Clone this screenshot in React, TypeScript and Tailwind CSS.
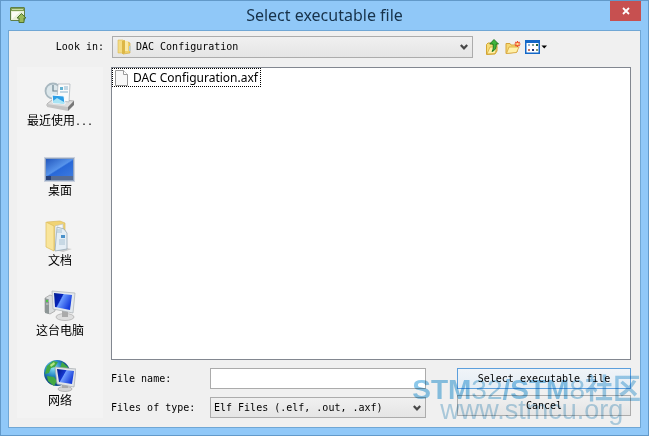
import React from 'react';

const MONO = "font-['DejaVu_Sans_Mono','Noto_Sans_CJK_SC',monospace] text-[10px] leading-4 text-black";

function AppIcon() {
  return (
    <svg className="h-[17px] w-[17px]" viewBox="0 0 17 17" aria-hidden="true">
      <rect x="0.5" y="0.5" width="14" height="13" rx="0.5" fill="#e8f0d8" stroke="#5f7f48" />
      <rect x="1" y="1" width="13" height="3" fill="#7f9f55" />
      <path d="M2 2.5h11" stroke="#c7d9a5" />
      <path d="M2 12V5h8z" fill="#fff" opacity="0.8" />
      <path d="M11.5 6.5 16 11h-2v4.500h-5V11H7z" fill="#9aba5a" stroke="#4e7430" />
    </svg>
  );
}

function FolderIcon() {
  return (
    <svg className="h-4 w-4" viewBox="0 0 16 16" aria-hidden="true">
      <path d="M2 1h5l1 1v13l-2-1H2z" fill="#f4dc84" stroke="#dcb850" strokeWidth="0.6" />
      <path d="M8 3h4l2 1v10l-7 1z" fill="#f0d06a" stroke="#cfa63c" strokeWidth="0.6" />
      <path d="M6 2l3-1v13l-3 1z" fill="#dcb646" />
      <path d="M9 2h3v10H9z" fill="#fae9a6" />
      <path d="M13 7h1.500v5H13z" fill="#b0cadb" />
    </svg>
  );
}

function FileIcon() {
  return (
    <svg className="h-4 w-[14px]" viewBox="0 0 14 16" aria-hidden="true">
      <path d="M.5.5h8l4 4v11H.5z" fill="#f7f7f7" stroke="#999" />
      <path d="M8.500.5v4h4" fill="#fff" stroke="#999" />
    </svg>
  );
}

function Chevron() {
  return (
    <svg className="pointer-events-none absolute top-1/2 right-[5px] h-2 w-2 -translate-y-1/2" viewBox="0 0 8 8" aria-hidden="true">
      <path d="M0.800 2 4 5.300 7.200 2" fill="none" stroke="#484848" strokeWidth="2.200" />
    </svg>
  );
}

function UpIcon() {
  return (
    <svg className="h-4 w-4" viewBox="0 0 16 16" aria-hidden="true">
      <path d="M1.500 5.500 3 4h3l1 1.500h5V12l-2 3-8.500.5z" fill="#f6dc78" stroke="#d3a534" />
      <path d="M2 15 5 8h7l-2 6.500z" fill="#fff0a8" stroke="#d3a534" strokeWidth="0.700" />
      <path d="M9 .5 13.500 5h-2.300c.3 4-1 6.500-4.200 7.500C8.500 10 8.500 8 8 5H4.800z" fill="#3fb43b" stroke="#18751d" strokeWidth="0.900" />
    </svg>
  );
}

function NewFolderIcon() {
  return (
    <svg className="h-4 w-4" viewBox="0 0 16 16" aria-hidden="true">
      <path d="M1 14.500v-10h4l1 1.500h6v7z" fill="#f5d873" stroke="#d6a43c" />
      <path d="M1.500 14.500 4 8h10l-2.500 5.500z" fill="#fff0a8" stroke="#d6a43c" strokeWidth="0.800" />
      <path d="M12.500 2v6M9.500 5h6M10.400 3l4.200 4M14.600 3l-4.200 4" stroke="#ee4422" strokeWidth="1.200" />
      <circle cx="12.500" cy="5" r="1.300" fill="#ffe18a" />
    </svg>
  );
}

function ViewIcon() {
  return (
    <svg className="h-4 w-[23px]" viewBox="0 0 23 16" aria-hidden="true">
      <rect x="0" y="1" width="15" height="14" fill="#1468c8" />
      <rect x="1.500" y="4" width="12" height="9.500" fill="#fff" />
      <path d="M3 5h2v2H3z" fill="#8fb2dd" />
      <path d="M7 5h2v2H7z" fill="#7f9b95" />
      <path d="M11 5h2v2h-2z" fill="#21683c" />
      <path d="M3 10h2v2H3z" fill="#c87563" />
      <path d="M7 10h2v2H7z" fill="#1d2f78" />
      <path d="M11 10h2v2h-2z" fill="#8a9a72" />
      <path d="M16.500 6.500h5.500l-2.750 3z" fill="#000" />
    </svg>
  );
}

function RecentIcon() {
  return (
    <svg className="h-8 w-8" viewBox="0 0 32 32" aria-hidden="true">
      <path d="M3 24 9 19l21 2-6 7-21-2z" fill="#dedede" stroke="#9b9b9b" strokeWidth="0.700" />
      <path d="m3 24 21 3v4L3 27z" fill="#c4c4c4" />
      <path d="m24 27 6-6v4l-6 6z" fill="#777" />
      <circle cx="9" cy="11" r="7.500" fill="#dce7eb" stroke="#a8b8c0" strokeWidth="1.800" />
      <path d="M9 5v6h5" fill="none" stroke="#6b8491" strokeWidth="1.200" />
      <path d="M14 4h12l-1 18-12-2z" fill="#fafafa" stroke="#a6b0b7" strokeWidth="0.700" />
      <path d="M16 7h3v3h-3z" fill="#61b2d3" />
      <path d="M20 7h4M20 9h4M16 12h8" stroke="#8ab3cc" />
      <path d="m8 15 12 1 1 8-12-1z" fill="#2b9ee6" stroke="#fff" />
      <path d="m9 21 4-3 7 4v2l-11-1z" fill="#a8e4f5" />
    </svg>
  );
}

function DesktopIcon() {
  return (
    <svg className="h-8 w-8" viewBox="0 0 32 32" aria-hidden="true">
      <defs>
        <linearGradient id="desk" x1="0" y1="0" x2="1" y2="1">
          <stop offset="0" stopColor="#2458bd" />
          <stop offset="0.500" stopColor="#5794eb" />
          <stop offset="0.550" stopColor="#2868d8" />
          <stop offset="1" stopColor="#3b79df" />
        </linearGradient>
      </defs>
      <rect x="0" y="7" width="31" height="25" fill="#c9d0dd" />
      <rect x="1" y="8" width="29" height="23" fill="#8fa3c0" />
      <rect x="2" y="9" width="27" height="17" fill="url(#desk)" />
      <path d="M2 26h27v4H2z" fill="#566c93" />
      <path d="M2 26h5v4H2z" fill="#263f76" />
    </svg>
  );
}

function DocumentsIcon() {
  return (
    <svg className="h-8 w-8" viewBox="0 0 32 32" aria-hidden="true">
      <path d="m22 28 6 1-9 3-8-2z" fill="#ccc" />
      <path d="M3 2 16 1l5 2v23l-11 4z" fill="#f0d374" stroke="#d8b552" strokeWidth="0.600" />
      <path d="m11 6 8-2v22l-8 4z" fill="#f5f8fa" stroke="#b9bec0" strokeWidth="0.600" />
      <path d="m13 7 7 2 3 4v16l-12 2z" fill="#e5eef5" stroke="#8fa5b1" strokeWidth="0.700" />
      <path d="m2 2 8 4v25l-8-4z" fill="#f9e59b" stroke="#dcbb59" strokeWidth="0.700" />
      <path d="M13 10h5M13 12h5M15 20h6M15 22h6M15 24h6" stroke="#9cb8ca" strokeWidth="0.800" />
      <path d="M17 15h4v3h-4z" fill="#4b92ca" />
    </svg>
  );
}

function ComputerIcon() {
  return (
    <svg className="h-8 w-8" viewBox="0 0 32 32" aria-hidden="true">
      <defs>
        <linearGradient id="screen" x1="0" y1="0" x2="1" y2="0.500">
          <stop offset="0" stopColor="#001d91" />
          <stop offset="0.420" stopColor="#0522b8" />
          <stop offset="0.480" stopColor="#6a9aff" />
          <stop offset="1" stopColor="#153bdc" />
        </linearGradient>
      </defs>
      <path d="m1 8 5-3 5 2v14l-5 3-5-2z" fill="#d9dcdd" stroke="#999" strokeWidth="0.700" />
      <path d="m1 8 4 1.500V24l-4-1z" fill="#8d9696" />
      <path d="M2 11h2.500M2 14h2.500" stroke="#d0d4d4" />
      <path d="M2 10h2v2H2z" fill="#4bc944" />
      <ellipse cx="21" cy="27" rx="9" ry="3.500" fill="#dedede" stroke="#a9a9a9" strokeWidth="0.700" />
      <path d="m18 20 6 1v6h-6z" fill="#aaa" />
      <path d="m8 1 23 2-2 20L9 19z" fill="#e3e8ec" stroke="#abb0b5" strokeWidth="0.700" />
      <path d="m10 3 18 2-2 15-15-3z" fill="url(#screen)" />
    </svg>
  );
}

function NetworkIcon() {
  return (
    <svg className="h-8 w-8" viewBox="0 0 32 32" aria-hidden="true">
      <defs>
        <radialGradient id="globe" cx="0.350" cy="0.300">
          <stop offset="0" stopColor="#8ee3f5" />
          <stop offset="0.600" stopColor="#2889c7" />
          <stop offset="1" stopColor="#114e8a" />
        </radialGradient>
        <linearGradient id="net" x1="0" y1="0" x2="1" y2="0.500">
          <stop offset="0" stopColor="#001785" />
          <stop offset="0.450" stopColor="#1537cf" />
          <stop offset="0.500" stopColor="#709eff" />
          <stop offset="1" stopColor="#173dd9" />
        </linearGradient>
      </defs>
      <circle cx="13" cy="13" r="13" fill="url(#globe)" />
      <path d="m3 6 6-5 5 1-3 5-4 1-2 5-4 1zM18 2l6 5-1 3-7-2zM3 16l7 1 3 4-3 5-6-5z" fill="#42a943" />
      <path d="m6 5 4-3 1 2-4 3z" fill="#b6e687" />
      <ellipse cx="21" cy="29" rx="7" ry="2.500" fill="#d5d5d5" stroke="#999" strokeWidth="0.600" />
      <path d="M18 24h6v4h-6z" fill="#aaa" />
      <path d="m11 7 21 2-2 18-17-3z" fill="#e2e5e8" stroke="#a4a9ad" strokeWidth="0.700" />
      <path d="m13 9 17 2-2 13-13-2z" fill="url(#net)" />
    </svg>
  );
}

const places = [
  { label: '最近使用', clipped: true, icon: <RecentIcon /> },
  { label: '桌面', clipped: false, icon: <DesktopIcon /> },
  { label: '文档', clipped: false, icon: <DocumentsIcon /> },
  { label: '这台电脑', clipped: false, icon: <ComputerIcon /> },
  { label: '网络', clipped: false, icon: <NetworkIcon /> },
];

export default function App() {
  const [fileName, setFileName] = React.useState('');

  return (
    <div className="relative flex min-h-screen flex-col border border-[#6299c9] bg-[#90c8f8] px-[7px] pb-[7px]">
      <header className="flex h-[29px] items-start">
        <div className="flex w-[90px] pt-[6px] pl-[2px]">
          <AppIcon />
        </div>
        <h1 className="flex-1 pt-[2px] text-center font-['Noto_Sans','Open_Sans',sans-serif] text-base leading-6 text-[#17324a]">
          Select executable file
        </h1>
        <div className="flex w-[90px] justify-end">
          <button aria-label="Close" className="flex h-5 w-[31px] items-center justify-center bg-[#c75050]">
            <svg className="h-2 w-2" viewBox="0 0 8 8" aria-hidden="true">
              <path d="m1 1 6 6M7 1 1 7" stroke="#fff" strokeWidth="1.800" />
            </svg>
          </button>
        </div>
      </header>

      <main className="flex flex-1 flex-col border border-[#70a7d5] bg-[#f0f0f0] pt-[5px] pr-[9px] pb-[9px] pl-2">
        <div className="flex items-center">
          <label htmlFor="look-in" className={`${MONO} w-[95px] pr-2 text-right`}>
            Look in:
          </label>
          <div className="relative min-w-0 flex-1">
            <span className="pointer-events-none absolute top-[3px] left-1">
              <FolderIcon />
            </span>
            <select
              id="look-in"
              className={`${MONO} block h-[22px] w-full appearance-none border border-[#acacac] bg-linear-to-b from-[#f0f0f0] to-[#e5e5e5] pl-[23px]`}
            >
              <option>DAC Configuration</option>
            </select>
            <Chevron />
          </div>
          <div className="flex w-[158px] items-center gap-1 pl-3">
            <button aria-label="Up one level"><UpIcon /></button>
            <button aria-label="New folder"><NewFolderIcon /></button>
            <button aria-label="View"><ViewIcon /></button>
          </div>
        </div>

        <div className="mt-[9px] flex flex-1 gap-2">
          <nav className="flex w-[86px] shrink-0 flex-col gap-[22px] bg-[#f3f3f3] pt-[13px]">
            {places.map((place) => (
              <button key={place.label} className="flex flex-col items-center">
                {place.icon}
                <span className="block h-4 font-['Noto_Sans_CJK_SC',sans-serif] text-xs leading-4 text-black">
                  {place.label}
                  {place.clipped && <span className={MONO}>...</span>}
                </span>
              </button>
            ))}
          </nav>

          <div className="flex min-w-0 flex-1 flex-col">
            <ul className="flex-1 border border-[#828790] bg-white">
              <li className="flex">
                <button className="flex h-[19px] items-center gap-1 border border-dotted border-black px-[2px] font-['Noto_Sans','Open_Sans',sans-serif] text-xs leading-4 text-black">
                  <FileIcon />
                  DAC Configuration.axf
                </button>
              </li>
            </ul>

            <div className="mt-2 flex items-start">
              <div className="flex min-w-0 flex-1 flex-col gap-2">
                <div className="flex items-center">
                  <label htmlFor="file-name" className={`${MONO} w-[99px] shrink-0`}>File name:</label>
                  <input
                    id="file-name"
                    type="text"
                    value={fileName}
                    onChange={(e) => setFileName(e.target.value)}
                    className={`${MONO} h-[21px] w-full min-w-0 border border-[#ababab] bg-white px-1`}
                  />
                </div>
                <div className="flex items-center">
                  <label htmlFor="file-type" className={`${MONO} w-[99px] shrink-0`}>Files of type:</label>
                  <div className="relative min-w-0 flex-1">
                    <select
                      id="file-type"
                      className={`${MONO} block h-[21px] w-full appearance-none border border-[#acacac] bg-linear-to-b from-[#f0f0f0] to-[#e5e5e5] pl-[3px]`}
                    >
                      <option>Elf Files (.elf, .out, .axf)</option>
                    </select>
                    <Chevron />
                  </div>
                </div>
              </div>
              <div className="ml-[31px] flex w-[174px] flex-col gap-[6px]">
                <button className={`${MONO} h-[21px] border border-[#5c9fdc] bg-linear-to-b from-[#f0f4f8] to-[#e4edf5]`}>
                  Select executable file
                </button>
                <button className={`${MONO} h-[21px] border border-[#acacac] bg-linear-to-b from-[#f0f0f0] to-[#e5e5e5]`}>
                  Cancel
                </button>
              </div>
            </div>
          </div>
        </div>
      </main>

      <div className="pointer-events-none absolute right-[7px] bottom-[13px] font-['Liberation_Sans','Noto_Sans_CJK_SC',sans-serif] text-[#8cc8ea] mix-blend-multiply">
        <p className="text-[28px] leading-4 font-bold">
          STM<span className="font-normal text-[#a6d2ea]">32</span>/STM<span className="font-normal text-[#a6d2ea]">8</span>
          <span className="text-[#a0d0ec]">社区</span>
        </p>
        <p className="pl-7 text-[27px] leading-6 text-[#b4d5e8]">www.stmcu.org</p>
      </div>
    </div>
  );
}
